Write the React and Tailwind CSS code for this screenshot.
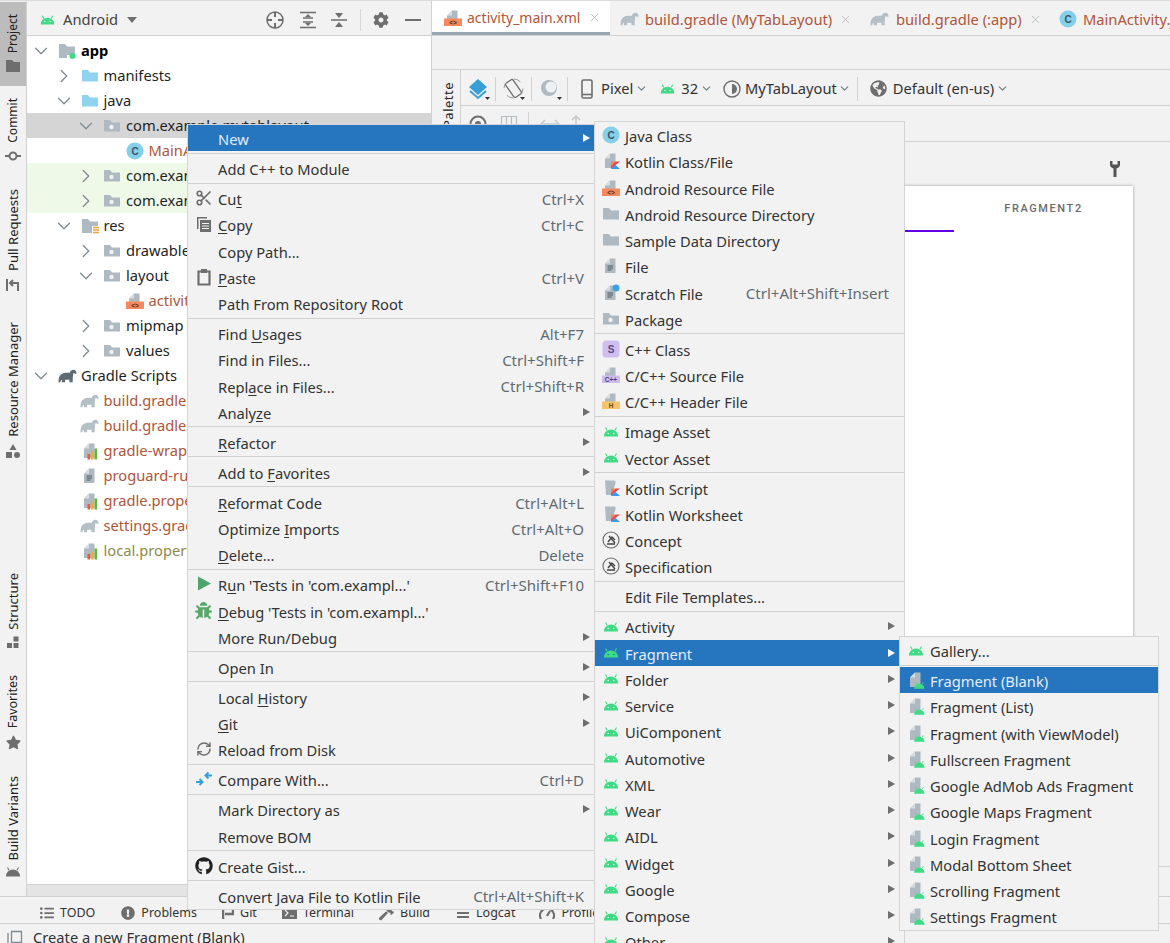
import React from "react";
import { ChevronRight, ChevronDown, Scissors, RefreshCw, X } from "lucide-react";
import { FaCog, FaGithub, FaGlobeAmericas, FaStar, FaBug, FaListUl, FaExclamationCircle, FaHammer } from "react-icons/fa";

// ------------------------------
// Small drawn icons
// ------------------------------
const Droid = ({ className = "w-[16px] h-[11px]", color = "#3ddc84", eye = "#f2f2f2" }) => (
  <svg viewBox="0 0 20 14" className={`shrink-0 ${className}`}>
    <path d="M1 13.5a9 9 0 0 1 18 0z" fill={color} />
    <path d="M5 5.5L3 2M15 5.5L17 2" stroke={color} strokeWidth="1.4" />
    <circle cx="6.5" cy="9.5" r="1" fill={eye} />
    <circle cx="13.5" cy="9.5" r="1" fill={eye} />
  </svg>
);

const Svg = ({ children, className = "w-[18px] h-[18px]" }) => (
  <svg viewBox="0 0 18 18" className={`shrink-0 ${className}`}>{children}</svg>
);

const Page = ({ color = "#afb9c1" }) => (
  <>
    <path d="M3 6.5L8 1.5h5.5V16H3z" fill={color} />
    <path d="M3 6.5h5v-5z" fill="#d8dde1" />
  </>
);

const Folder = ({ dot = false, color = "#afb9c1" }) => (
  <Svg>
    <path d="M1 3h6l2 2.500h8V14.500H1z" fill={color} />
    {dot && <circle cx="8.500" cy="10" r="2.200" fill="#eef0f2" />}
  </Svg>
);

const BlueFolder = () => (
  <Svg>
    <path d="M1 3h6l2 2.500h8V14.500H1z" fill="#8fd3f0" />
  </Svg>
);

const ClassIcon = ({ letter = "C", bg = "#84cfe9", fg = "#3b5560" }) => (
  <Svg>
    <circle cx="9" cy="9" r="8.500" fill={bg} />
    <text x="9" y="12.500" textAnchor="middle" fontSize="10" fontWeight="700" fontFamily="Liberation Sans" fill={fg}>{letter}</text>
  </Svg>
);

const Strip = ({ color, text, fg }) => (
  <Svg>
    <Page />
    <rect x="0" y="9.500" width="18" height="7.500" fill={color} />
    <text x="9" y="15.500" textAnchor="middle" fontSize="6.500" fontWeight="700" fontFamily="Liberation Sans" fill={fg}>{text}</text>
  </Svg>
);

const KotlinMark = () => (
  <>
    <path d="M9 9.500h4.500L9 14z" fill="#f88a3a" />
    <path d="M9 17v-3l4.500-4.500H18L13.500 13z" fill="#e44857" />
    <path d="M9 17l4.500-4 4.500 4z" fill="#2f9cf0" />
  </>
);

const Elephant = ({ color = "#b4bfc6", className = "w-[19px] h-[14px]" }) => (
  <svg viewBox="0 0 20 14" className={`shrink-0 ${className}`}>
    <path d="M.5 13.500C.5 7.500 2.500 4 8 3.500h4.500C13 1.500 14.500.5 16.500.5c2 0 3 2 3 4h-2c-.2-1-1.200-1-1.500.5l-.5 4v4.500H12V11H7.500v2.500H4V11c-1 0-1.500 1-1.500 2.500z" fill={color} />
  </svg>
);

const Props = () => (
  <Svg>
    <Page />
    <rect x="6.500" y="12" width="2.600" height="5.500" fill="#ef5a2e" />
    <rect x="10" y="9.500" width="2.600" height="8" fill="#f2a83b" />
    <rect x="13.500" y="6.500" width="2.600" height="11" fill="#62b543" />
  </Svg>
);

const TextFile = ({ clock = false }) => (
  <Svg>
    <Page />
    <path d="M5.500 9h5.500M5.500 11h5.500M5.500 13h4" stroke="#4d5a63" strokeWidth="1" />
    {clock && <circle cx="14" cy="4" r="3.500" fill="#3aa3e3" />}
  </Svg>
);

const Nb = () => (
  <Svg>
    <circle cx="9" cy="9" r="8" fill="#f2f2f2" stroke="#6e6e6e" strokeWidth="1.200" />
    <path d="M5 13h8M6 11l4-5 3 3M7 5l6 7" fill="none" stroke="#444" strokeWidth="1.400" />
  </Svg>
);

const FragFile = () => (
  <Svg>
    <Page />
    <g transform="translate(6.500 10) scale(0.58)">
      <path d="M1 13.500a9 9 0 0 1 18 0z" fill="#3ddc84" />
      <path d="M5 5.500L3 2M15 5.500L17 2" stroke="#3ddc84" strokeWidth="1.400" />
    </g>
  </Svg>
);

const KotlinFile = ({ script = false }) => (
  <Svg>
    {script ? <path d="M3 1.500h9c1 0 2 1 1.500 3L12 9v7H4z" fill="#afb9c1" /> : <Page />}
    <KotlinMark />
  </Svg>
);

const DroidSlot = ({ eye }) => <Droid eye={eye} />;

const ICONS = {
  droid: <DroidSlot />,
  droidSel: <DroidSlot eye="#2675bf" />,
  java: <ClassIcon />,
  kotlin: <KotlinFile />,
  kscript: <KotlinFile script />,
  res: <Strip color="#f4895f" text="<>" fg="#5a2c18" />,
  folder: <Folder />,
  pkg: <Folder dot />,
  blue: <BlueFolder />,
  file: <TextFile />,
  scratch: <TextFile clock />,
  cpp: (
    <Svg>
      <rect x=".5" y=".5" width="17" height="17" rx="3.500" fill="#d0bdf2" />
      <text x="9" y="12.500" textAnchor="middle" fontSize="10" fontWeight="700" fontFamily="Liberation Sans" fill="#5c4a80">S</text>
    </Svg>
  ),
  csrc: <Strip color="#cdbcee" text="C++" fg="#4d3d73" />,
  hdr: <Strip color="#f6c36d" text="H" fg="#6e4a12" />,
  nb: <Nb />,
  frag: <FragFile />,
  props: <Props />,
  elephant: <Elephant />,
  elephantDark: <Elephant color="#5f6b73" />,
  cut: <Scissors size={18} color="#6e6e6e" strokeWidth={2.200} />,
  copy: (
    <Svg>
      <path d="M2 2h10v1.500H3.500V14H2z" fill="#6e6e6e" />
      <rect x="5" y="5" width="11" height="12" fill="#6e6e6e" />
      <path d="M7 8.500h7M7 11h7M7 13.500h7" stroke="#f2f2f2" strokeWidth="1" />
    </Svg>
  ),
  paste: (
    <Svg>
      <path d="M3.500 3.500h11v13h-11z" fill="none" stroke="#6e6e6e" strokeWidth="2.200" />
      <rect x="6" y="1" width="6" height="4" fill="#6e6e6e" />
    </Svg>
  ),
  run: (
    <Svg>
      <path d="M3 1.500L16 8.500L3 15.500z" fill="#4fa36c" />
    </Svg>
  ),
  debug: <FaBug size={17} color="#59a869" />,
  reload: <RefreshCw size={16} color="#6e6e6e" strokeWidth={2.200} />,
  compare: (
    <Svg>
      <path d="M1 12h6M4.500 9l3 3-3 3" fill="none" stroke="#389fd6" strokeWidth="2" />
      <path d="M17 5.500h-6M13.500 2.500l-3 3 3 3" fill="none" stroke="#389fd6" strokeWidth="2" />
    </Svg>
  ),
  github: <FaGithub size={18} color="#222" />,
};

// ------------------------------
// Tree data
// ------------------------------
const TREE = [
  { d: 0, open: true, icon: <svg viewBox="0 0 18 18" className="w-[18px] h-[18px]"><path d="M1 2h6l2 2.500h8V13H9v3H1z" fill="#afb9c1" /><circle cx="14.500" cy="14" r="3" fill="#3ddc84" /></svg>, label: "app", cls: "font-bold text-black" },
  { d: 1, closed: true, icon: "blue", label: "manifests" },
  { d: 1, open: true, icon: "blue", label: "java" },
  { d: 2, open: true, icon: "pkg", label: "com.example.mytablayout", row: "bg-[#d5d5d5]" },
  { d: 3, icon: "java", label: "MainActivity", cls: "text-[#b0553a]" },
  { d: 2, closed: true, icon: "pkg", label: "com.example.mytablayout (androidTest)", row: "bg-[#eff9e8]" },
  { d: 2, closed: true, icon: "pkg", label: "com.example.mytablayout (test)", row: "bg-[#eff9e8]" },
  { d: 1, open: true, icon: <svg viewBox="0 0 18 18" className="w-[18px] h-[18px]"><path d="M1 2h6l2 2.500h8V9h-6v7H1z" fill="#afb9c1" /><path d="M12 10.500h6M12 13h6M12 15.500h6" stroke="#e8a33d" strokeWidth="1.400" /></svg>, label: "res" },
  { d: 2, closed: true, icon: "pkg", label: "drawable" },
  { d: 2, open: true, icon: "pkg", label: "layout" },
  { d: 3, icon: "res", label: "activity_main.xml", cls: "text-[#b0553a]" },
  { d: 2, closed: true, icon: "pkg", label: "mipmap" },
  { d: 2, closed: true, icon: "pkg", label: "values" },
  { d: 0, open: true, icon: "elephantDark", label: "Gradle Scripts" },
  { d: 1, icon: "elephant", label: "build.gradle (Project: MyTabLayout)", cls: "text-[#b0553a]" },
  { d: 1, icon: "elephant", label: "build.gradle (Module: MyTabLayout.app)", cls: "text-[#b0553a]" },
  { d: 1, icon: "props", label: "gradle-wrapper.properties", cls: "text-[#b0553a]" },
  { d: 1, icon: "file", label: "proguard-rules.pro", cls: "text-[#b0553a]" },
  { d: 1, icon: "props", label: "gradle.properties", cls: "text-[#b0553a]" },
  { d: 1, icon: "elephant", label: "settings.gradle", cls: "text-[#b0553a]" },
  { d: 1, icon: "props", label: "local.properties", cls: "text-[#8c8a4a]" },
];

// "&" marks the mnemonic letter
const MAIN_MENU = [
  { label: "New", selected: true, arrow: true },
  "-",
  { label: "Add C++ to Module" },
  "-",
  { label: "Cu&t", icon: "cut", key: "Ctrl+X" },
  { label: "&Copy", icon: "copy", key: "Ctrl+C" },
  { label: "Copy Path..." },
  { label: "&Paste", icon: "paste", key: "Ctrl+V" },
  { label: "Path From Repository Root" },
  "-",
  { label: "Find &Usages", key: "Alt+F7" },
  { label: "Find in Files...", key: "Ctrl+Shift+F" },
  { label: "Repl&ace in Files...", key: "Ctrl+Shift+R" },
  { label: "Analy&ze", arrow: true },
  "-",
  { label: "&Refactor", arrow: true },
  "-",
  { label: "Add to &Favorites", arrow: true },
  "-",
  { label: "&Reformat Code", key: "Ctrl+Alt+L" },
  { label: "Optimize &Imports", key: "Ctrl+Alt+O" },
  { label: "&Delete...", key: "Delete" },
  "-",
  { label: "R&un 'Tests in 'com.exampl...'", icon: "run", key: "Ctrl+Shift+F10" },
  { label: "&Debug 'Tests in 'com.exampl...'", icon: "debug" },
  { label: "More Run/Debug", arrow: true },
  "-",
  { label: "Open In", arrow: true },
  "-",
  { label: "Local &History", arrow: true },
  { label: "&Git", arrow: true },
  { label: "Reload from Disk", icon: "reload" },
  "-",
  { label: "Compare With...", icon: "compare", key: "Ctrl+D" },
  "-",
  { label: "Mark Directory as", arrow: true },
  { label: "Remove BOM" },
  "-",
  { label: "Create Gist...", icon: "github" },
  "-",
  { label: "Convert Java File to Kotlin File", key: "Ctrl+Alt+Shift+K" },
];

const NEW_MENU = [
  { label: "Java Class", icon: "java" },
  { label: "Kotlin Class/File", icon: "kotlin" },
  { label: "Android Resource File", icon: "res" },
  { label: "Android Resource Directory", icon: "folder" },
  { label: "Sample Data Directory", icon: "folder" },
  { label: "File", icon: "file" },
  { label: "Scratch File", icon: "scratch", key: "Ctrl+Alt+Shift+Insert" },
  { label: "Package", icon: "pkg" },
  "-",
  { label: "C++ Class", icon: "cpp" },
  { label: "C/C++ Source File", icon: "csrc" },
  { label: "C/C++ Header File", icon: "hdr" },
  "-",
  { label: "Image Asset", icon: "droid" },
  { label: "Vector Asset", icon: "droid" },
  "-",
  { label: "Kotlin Script", icon: "kscript" },
  { label: "Kotlin Worksheet", icon: "kscript" },
  { label: "Concept", icon: "nb" },
  { label: "Specification", icon: "nb" },
  "-",
  { label: "Edit File Templates..." },
  "-",
  { label: "Activity", icon: "droid", arrow: true },
  { label: "Fragment", icon: "droidSel", arrow: true, selected: true },
  ...["Folder", "Service", "UiComponent", "Automotive", "XML", "Wear", "AIDL", "Widget", "Google", "Compose", "Other"].map((label) => ({ label, icon: "droid", arrow: true })),
];

const FRAGMENT_MENU = [
  { label: "Gallery...", icon: "droid" },
  "-",
  { label: "Fragment (Blank)", icon: "frag", selected: true },
  ...["Fragment (List)", "Fragment (with ViewModel)", "Fullscreen Fragment", "Google AdMob Ads Fragment", "Google Maps Fragment", "Login Fragment", "Modal Bottom Sheet", "Scrolling Fragment", "Settings Fragment"].map((label) => ({ label, icon: "frag" })),
];

const renderIcon = (icon) => (typeof icon === "string" ? ICONS[icon] : icon);

const Mnemonic = ({ text }) => {
  const at = text.indexOf("&");
  if (at < 0) return text;
  return (
    <>
      {text.slice(0, at)}
      <u className="underline-offset-2">{text[at + 1]}</u>
      {text.slice(at + 2)}
    </>
  );
};

// ------------------------------
// Popup menu
// ------------------------------
const Menu = ({ items, className, keyClass, arrowClass }) => (
  <div className={`absolute bg-[#f2f2f2] border border-[#d4d4d4] text-[#333] text-[14.7px] ${className}`}>
    {items.map((it, i) =>
      it === "-" ? (
        <div key={i} className="h-[3.75px] flex items-center">
          <div className="w-full h-px bg-[#d1d1d1]" />
        </div>
      ) : (
        <div
          key={i}
          className={`h-[26.25px] flex items-center whitespace-nowrap ${it.selected ? "bg-[#2675bf] text-[#e3eefa]" : ""}`}
        >
          <span className="w-[30px] shrink-0 flex justify-center items-center pl-[1px]">{it.icon && renderIcon(it.icon)}</span>
          <span className="pt-[2px]"><Mnemonic text={it.label} /></span>
          {it.key && <span className={`ml-auto pt-[2px] text-[15px] text-[#5f6b73] ${keyClass}`}>{it.key}</span>}
          {it.arrow && (
            <span className={`ml-auto w-0 h-0 border-y-[4.5px] border-y-transparent border-l-[7px] ${it.selected ? "border-l-white" : "border-l-[#6e6e6e]"} ${arrowClass}`} />
          )}
        </div>
      )
    )}
  </div>
);

// ------------------------------
// Left rail
// ------------------------------
const RAIL = [
  {
    label: "Project", size: "text-[12px]", wrap: "bg-[#bcbcbc] mt-px pt-[12px] pb-[13px]",
    icon: <svg viewBox="0 0 16 14" className="w-[16px] h-[14px]"><path d="M1 1h6l2 2h6v10H1z" fill="#6e6e6e" /></svg>,
  },
  {
    label: "Commit", size: "text-[12px]", wrap: "mt-[12px]",
    icon: <svg viewBox="0 0 18 14" className="w-[18px] h-[14px]"><circle cx="9" cy="7" r="3.500" fill="none" stroke="#6e6e6e" strokeWidth="2" /><path d="M1 7h4M13 7h4" stroke="#6e6e6e" strokeWidth="2" /></svg>,
  },
  {
    label: "Pull Requests", size: "text-[13px]", wrap: "mt-[26px]",
    icon: <svg viewBox="0 0 16 16" className="w-[16px] h-[16px]"><path d="M2 2v12M13 14V6H5M8 3L5 6l3 3" fill="none" stroke="#6e6e6e" strokeWidth="2" /></svg>,
  },
  {
    label: "Resource Manager", size: "text-[13px]", wrap: "mt-[29px]",
    icon: <svg viewBox="0 0 16 16" className="w-[16px] h-[16px]"><path d="M8 1l3.500 6h-7z" fill="#6e6e6e" /><rect x="1" y="9" width="6" height="6" fill="#6e6e6e" /><circle cx="12" cy="12" r="3" fill="#6e6e6e" /></svg>,
  },
  {
    label: "Structure", size: "text-[13px]", wrap: "mt-[114px]",
    icon: <svg viewBox="0 0 14 14" className="w-[14px] h-[14px]"><rect x="7.500" y="1.500" width="5" height="5" fill="#6e6e6e" /><rect x="1" y="8" width="5" height="5" fill="#6e6e6e" /><rect x="7.500" y="8" width="5" height="5" fill="#6e6e6e" /></svg>,
  },
  { label: "Favorites", size: "text-[12.5px]", wrap: "mt-[26px]", icon: <FaStar size={15} color="#6e6e6e" /> },
  { label: "Build Variants", size: "text-[13px]", wrap: "mt-[26px]", icon: <Droid className="w-[16px] h-[11px]" color="#6e6e6e" eye="#6e6e6e" /> },
];

const Rail = () => (
  <div className="w-[27px] shrink-0 bg-[#f2f2f2] border-r border-[#d1d1d1] flex flex-col items-stretch">
    {RAIL.map((r) => (
      <div key={r.label} className={`flex flex-col items-center ${r.wrap}`}>
        <span className={`[writing-mode:vertical-rl] rotate-180 leading-[16px] text-[#222] whitespace-nowrap ${r.size}`}>{r.label}</span>
        <span className="mt-[6px] flex justify-center">{r.icon}</span>
      </div>
    ))}
  </div>
);

// ------------------------------
// Project tree
// ------------------------------
const ProjectPanel = () => (
  <div className="w-[405px] shrink-0 flex flex-col border-r border-[#d1d1d1]">
    <div className="h-[35px] shrink-0 border-b border-[#d1d1d1] bg-[#f2f2f2] flex items-center pt-[3px] text-[#444] text-[14.7px]">
      <Droid className="ml-[13px] w-[15px] h-[11px]" />
      <span className="ml-[8px]">Android</span>
      <span className="ml-[9px] w-0 h-0 border-x-[5.500px] border-x-transparent border-t-[6px] border-t-[#6e6e6e]" />
      <svg viewBox="0 0 18 18" className="w-[18px] h-[18px] ml-[129px]"><circle cx="9" cy="9" r="8" fill="none" stroke="#6e6e6e" strokeWidth="1.500" /><path d="M9 1v5M9 12v5M1 9h5M12 9h5" stroke="#6e6e6e" strokeWidth="2" /></svg>
      <svg viewBox="0 0 18 18" className="w-[18px] h-[18px] ml-[15px]"><path d="M1 1.500h16M1 16.500h16M4 11h10M4 7h10" stroke="#6e6e6e" strokeWidth="1.500" /><path d="M9 3l3 3H6zM9 15l3-3H6z" fill="#6e6e6e" /></svg>
      <svg viewBox="0 0 18 18" className="w-[18px] h-[18px] ml-[13px]"><path d="M1 9h16" stroke="#6e6e6e" strokeWidth="1.500" /><path d="M9 7L5 2h8zM9 11l4 5H5z" fill="#6e6e6e" /></svg>
      <span className="ml-[12px] w-px h-[22px] bg-[#d8d8d8]" />
      <FaCog size={16} color="#6e6e6e" className="ml-[12px]" />
      <span className="ml-[16px] w-[16px] h-[2px] bg-[#6e6e6e]" />
    </div>
    <div className="flex-1 bg-white pt-[2px] overflow-hidden text-[14.7px] text-[#1f1f1f]">
      {TREE.map((t, i) => (
        <div key={i} className={`h-[25px] flex items-center whitespace-nowrap ${t.row || ""}`} style={{ paddingLeft: 7 + t.d * 22.5 }}>
          <span className="w-[14px] shrink-0 flex justify-center">
            {t.open && <ChevronDown size={22} color="#7f8b91" strokeWidth={1.400} className="shrink-0" />}
            {t.closed && <ChevronRight size={22} color="#7f8b91" strokeWidth={1.400} className="shrink-0" />}
          </span>
          <span className="ml-[9px] w-[20px] shrink-0 flex justify-center">{renderIcon(t.icon)}</span>
          <span className={`ml-[4px] ${t.cls || ""}`}>{t.label}</span>
        </div>
      ))}
    </div>
    <div className="h-[12px] shrink-0 bg-[#e4e4e4] border-t border-[#d1d1d1]" />
  </div>
);

// ------------------------------
// Editor side
// ------------------------------
const TABS = [
  { icon: "res", label: "activity_main.xml", active: true, w: "w-[178px]", pl: "pl-[12px]", ml: "ml-[5px] text-[14px]", x: "ml-[8px]" },
  { icon: "elephant", label: "build.gradle (MyTabLayout)", w: "w-[250px]", pl: "pl-[10px]", ml: "ml-[6px]", x: "ml-[7px]" },
  { icon: "elephant", label: "build.gradle (:app)", w: "w-[189px]", pl: "pl-[10px]", ml: "ml-[7px]", x: "ml-[7px]" },
  { icon: "java", label: "MainActivity.java", w: "w-[200px]", pl: "pl-[10px]", ml: "ml-[6px]" },
];

const Tabs = () => (
  <div className="h-[35px] shrink-0 flex border-b border-[#d1d1d1] bg-[#f2f2f2] overflow-hidden whitespace-nowrap text-[14.7px] text-[#b0553a]">
    {TABS.map((t) => (
      <div key={t.label} className={`h-[34px] shrink-0 flex items-center pt-[2px] ${t.pl} ${t.w} ${t.active ? "bg-white border-b-[3px] border-[#9aa7b0]" : ""}`}>
        {renderIcon(t.icon)}
        <span className={t.ml}>{t.label}</span>
        {t.x && <X size={13} color="#b5b5b5" strokeWidth={1.500} className={`shrink-0 ${t.x}`} />}
      </div>
    ))}
  </div>
);

const Sep = ({ className = "" }) => <span className={`shrink-0 w-px h-[24px] bg-[#d1d1d1] ${className}`} />;
const Drop = ({ className = "" }) => <ChevronDown size={13} color="#6e7a82" strokeWidth={2} className={`shrink-0 ${className}`} />;
const Corner = () => <path d="M17 19h5l-2.500 3z" fill="#333" />;

const DesignToolbar = () => (
  <div className="h-[36px] shrink-0 border-b border-[#d1d1d1] flex items-center pt-[2px] text-[#333] text-[14.7px] whitespace-nowrap">
    <svg viewBox="0 0 22 22" className="ml-[7px] w-[22px] h-[22px]"><path d="M10 1l9 8-9 8-9-8z" fill="#389fd6" /><path d="M2 13l8 7 8-7" fill="none" stroke="#389fd6" strokeWidth="2" /><Corner /></svg>
    <Sep className="ml-[5px]" />
    <svg viewBox="0 0 22 22" className="ml-[7px] w-[22px] h-[22px]"><rect x="6" y="2" width="9" height="17" rx="1.500" transform="rotate(-35 10.500 10.500)" fill="none" stroke="#6e6e6e" strokeWidth="1.300" /><circle cx="10.500" cy="10.500" r="9.500" fill="none" stroke="#9a9a9a" strokeWidth="1" strokeDasharray="7 8" /><Corner /></svg>
    <Sep className="ml-[6px]" />
    <svg viewBox="0 0 22 22" className="ml-[8px] w-[22px] h-[22px]"><circle cx="9" cy="10" r="8" fill="#afb9c1" /><circle cx="11" cy="9" r="5.500" fill="#eef1f3" /><Corner /></svg>
    <Sep className="ml-[5px]" />
    <svg viewBox="0 0 12 20" className="ml-[13px] w-[12px] h-[20px]"><rect x="1" y="1" width="10" height="18" rx="1.500" fill="none" stroke="#6e6e6e" strokeWidth="1.600" /><path d="M1 15.500h10" stroke="#6e6e6e" strokeWidth="1.600" /></svg>
    <span className="ml-[8px]">Pixel</span>
    <Drop className="ml-[2px]" />
    <Droid className="ml-[12px] w-[15px] h-[11px]" />
    <span className="ml-[6px]">32</span>
    <Drop className="ml-[2px]" />
    <svg viewBox="0 0 18 18" className="ml-[10px] w-[18px] h-[18px]"><circle cx="9" cy="9" r="8" fill="none" stroke="#6e6e6e" strokeWidth="1.400" /><path d="M9 4a5 5 0 0 1 0 10z" fill="#6e6e6e" /></svg>
    <span className="ml-[4px]">MyTabLayout</span>
    <Drop className="ml-[1px]" />
    <Sep className="ml-[6px]" />
    <FaGlobeAmericas size={17} color="#6e6e6e" className="ml-[12px]" />
    <span className="ml-[6px]">Default (en-us)</span>
    <Drop className="ml-[2px]" />
  </div>
);

const SecondToolbar = () => (
  <div className="h-[36px] shrink-0 border-b border-[#d1d1d1] flex items-center">
    <svg viewBox="0 0 18 18" className="ml-[8px] w-[18px] h-[18px]"><circle cx="9" cy="9" r="7.500" fill="none" stroke="#6e6e6e" strokeWidth="2" /><circle cx="9" cy="9" r="3" fill="#6e6e6e" /></svg>
    <svg viewBox="0 0 18 18" className="ml-[13px] w-[18px] h-[18px]"><path d="M1.500 1.500h15v15h-15zM6.500 1.500v15M11.500 1.500v15" fill="none" stroke="#b5bdc3" strokeWidth="1.200" /></svg>
    <Sep className="ml-[10px]" />
    <svg viewBox="0 0 20 12" className="ml-[11px] w-[20px] h-[12px]"><path d="M1 6h18M5 2L1 6l4 4M15 2l4 4-4 4" fill="none" stroke="#c4c9cd" strokeWidth="1.500" /></svg>
    <svg viewBox="0 0 12 20" className="ml-[10px] w-[12px] h-[20px]"><path d="M6 19V2M2 6l4-4 4 4" fill="none" stroke="#c4c9cd" strokeWidth="1.500" /></svg>
  </div>
);

const DesignSurface = () => (
  <div className="flex-1 bg-[#f2f2f2] flex flex-col overflow-hidden">
    <div className="h-[44px] shrink-0 flex items-center justify-end pr-[49px] pt-[10px]">
      <svg viewBox="0 0 12 18" className="w-[12px] h-[18px]"><path d="M1 1v4c0 2 2 3 3.500 3.500V17h3V8.500C9 8 11 7 11 5V1L8.500 1v3.500h-5V1z" fill="#555" /></svg>
    </div>
    <div className="ml-auto mr-[37px] w-[358px] h-[620px] shrink-0 bg-white shadow-[0_0_3px_#9a9a9a]">
      <div className="h-[46px] flex">
        <div className="flex-1 border-b-2 border-[#6200ee]" />
        <div className="flex-1 flex items-center justify-center text-[11px] font-medium tracking-[1.600px] text-[#6b6b6b] font-['Roboto',sans-serif]">FRAGMENT2</div>
      </div>
    </div>
  </div>
);

const Editor = () => (
  <div className="flex-1 min-w-0 flex flex-col bg-[#f2f2f2]">
    <Tabs />
    <div className="h-[34px] shrink-0 border-b border-[#d1d1d1]" />
    <div className="flex-1 min-h-0 flex">
      <div className="w-[29px] shrink-0 border-r border-[#d1d1d1] flex justify-end pr-[4px] pt-[18px]">
        <span className="[writing-mode:vertical-rl] rotate-180 text-[13px] leading-[16px] tracking-[0.5px] text-[#222] h-[40px]">Palette</span>
      </div>
      <div className="flex-1 min-w-0 flex flex-col">
        <DesignToolbar />
        <SecondToolbar />
        <DesignSurface />
      </div>
    </div>
    <div className="h-[30px] shrink-0 border-t border-[#d1d1d1]" />
  </div>
);

// ------------------------------
// Bottom bars
// ------------------------------
const BOTTOM = [
  { label: "TODO", ml: "ml-[40px]", icon: <FaListUl size={14} color="#6e6e6e" /> },
  { label: "Problems", ml: "ml-[26px]", icon: <FaExclamationCircle size={14} color="#6e6e6e" /> },
  { label: "Git", ml: "ml-[25px]", icon: <svg viewBox="0 0 12 14" className="w-[12px] h-[14px]"><path d="M1 1v12M11 2v6H3" fill="none" stroke="#6e6e6e" strokeWidth="2.500" /></svg> },
  { label: "Terminal", ml: "ml-[25px]", icon: <svg viewBox="0 0 15 12" className="w-[15px] h-[12px]"><rect x="0" y="0" width="15" height="12" fill="#6e6e6e" /><path d="M3 3l3 3-3 3M8 9h4" fill="none" stroke="#f2f2f2" strokeWidth="1.200" /></svg> },
  { label: "Build", ml: "ml-[25px]", icon: <FaHammer size={15} color="#6e6e6e" /> },
  { label: "Logcat", ml: "ml-[26px]", icon: <svg viewBox="0 0 14 12" className="w-[14px] h-[12px]"><path d="M1 2h8M1 6h12M1 10h12" stroke="#6e6e6e" strokeWidth="1.800" /></svg> },
  { label: "Profiler", ml: "ml-[24px]", icon: <svg viewBox="0 0 16 12" className="w-[16px] h-[12px]"><path d="M2 12a7 7 0 1 1 12 0M8 9l3-5" fill="none" stroke="#6e6e6e" strokeWidth="2.200" /></svg> },
];

const ToolBar = () => (
  <div className="h-[28px] shrink-0 bg-[#f2f2f2] border-t border-[#d1d1d1] border-b flex items-center pt-[6px] text-[12.5px] text-[#333] whitespace-nowrap">
    {BOTTOM.map((b) => (
      <div key={b.label} className={`flex items-center gap-[6px] ${b.ml}`}>
        {b.icon}
        <span>{b.label}</span>
      </div>
    ))}
  </div>
);

const StatusBar = () => (
  <div className="h-[19px] shrink-0 bg-[#f2f2f2] flex items-start text-[14.7px] text-[#333] whitespace-nowrap">
    <svg viewBox="0 0 16 16" className="ml-[7px] mt-[6px] w-[16px] h-[16px] shrink-0"><path d="M1 3v11M4.500 1.500h10v11h-10z" fill="none" stroke="#7f8b91" strokeWidth="1.300" /></svg>
    <span className="ml-[10px] leading-[26px]">Create a new Fragment (Blank)</span>
  </div>
);

export default function App() {
  return (
    <div className="relative w-[1170px] h-[943px] overflow-hidden bg-[#f2f2f2] font-['Noto_Sans',sans-serif] flex flex-col">
      <div className="flex-1 min-h-0 flex border-t border-[#dcdcdc]">
        <Rail />
        <ProjectPanel />
        <Editor />
      </div>
      <ToolBar />
      <StatusBar />

      <Menu items={MAIN_MENU} className="left-[187px] top-[124px] w-[408px]" keyClass="mr-[10px]" arrowClass="mr-[4px]" />
      <Menu items={NEW_MENU} className="left-[594px] top-[121px] w-[311px]" keyClass="mr-[15px]" arrowClass="mr-[9px]" />
      <Menu items={FRAGMENT_MENU} className="left-[899px] top-[636px] w-[260px]" />
    </div>
  );
}
